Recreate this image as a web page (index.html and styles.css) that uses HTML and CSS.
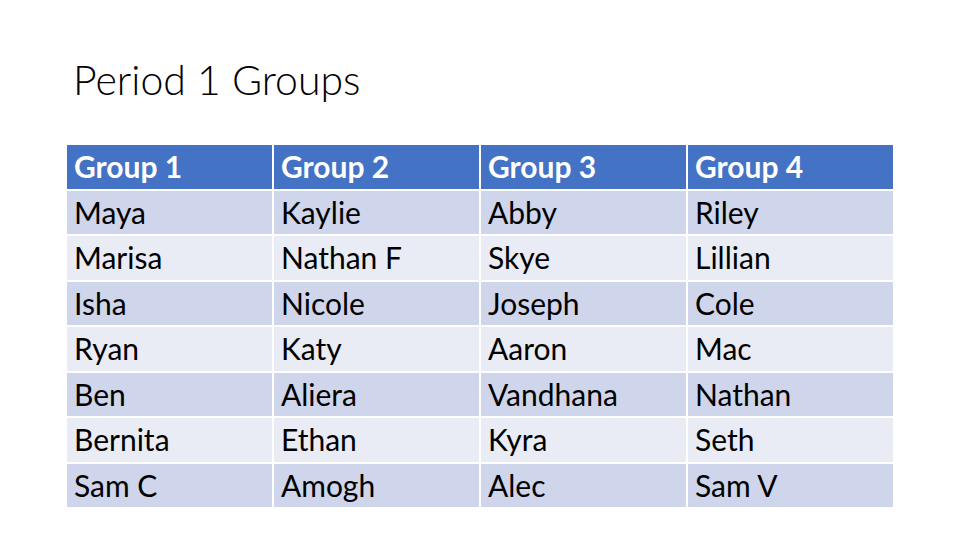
FILE: index.html
```html
<!DOCTYPE html>
<html>
<head>
<meta charset="utf-8">
<link rel="stylesheet" href="styles.css">
</head>
<body>
<div class="slide">
  <h1 class="title">Period 1 Groups</h1>
  <div class="table">
    <div class="cell head">Group 1</div>
    <div class="cell head">Group 2</div>
    <div class="cell head">Group 3</div>
    <div class="cell head">Group 4</div>

    <div class="cell odd">Maya</div>
    <div class="cell odd">Kaylie</div>
    <div class="cell odd">Abby</div>
    <div class="cell odd">Riley</div>

    <div class="cell even">Marisa</div>
    <div class="cell even">Nathan F</div>
    <div class="cell even">Skye</div>
    <div class="cell even">Lillian</div>

    <div class="cell odd">Isha</div>
    <div class="cell odd">Nicole</div>
    <div class="cell odd">Joseph</div>
    <div class="cell odd">Cole</div>

    <div class="cell even">Ryan</div>
    <div class="cell even">Katy</div>
    <div class="cell even">Aaron</div>
    <div class="cell even">Mac</div>

    <div class="cell odd">Ben</div>
    <div class="cell odd">Aliera</div>
    <div class="cell odd">Vandhana</div>
    <div class="cell odd">Nathan</div>

    <div class="cell even">Bernita</div>
    <div class="cell even">Ethan</div>
    <div class="cell even">Kyra</div>
    <div class="cell even">Seth</div>

    <div class="cell odd">Sam C</div>
    <div class="cell odd">Amogh</div>
    <div class="cell odd">Alec</div>
    <div class="cell odd">Sam V</div>
  </div>
</div>
</body>
</html>
```
FILE: styles.css
```css
html, body {
  margin: 0;
  padding: 0;
  background: #ffffff;
}
.slide {
  width: 960px;
  height: 540px;
  box-sizing: border-box;
  padding: 56px 0 0 67px;
  background: #ffffff;
  font-family: Lato, "Liberation Sans", sans-serif;
}
.title {
  margin: 0 0 0 6px;
  font-weight: 300;
  font-size: 41px;
  line-height: 48px;
  color: #000000;
  height: 89px;
}
.table {
  display: grid;
  grid-template-columns: repeat(4, 205px);
  grid-template-rows: repeat(8, 43.5px);
  gap: 2px;
  width: 826px;
}
.cell {
  padding-left: 7px;
  font-size: 30px;
  line-height: 43.5px;
  color: #000000;
  white-space: nowrap;
}
.head {
  background: #4472c4;
  color: #ffffff;
  font-weight: 700;
}
.odd {
  background: #cfd5ea;
}
.even {
  background: #e9ebf5;
}
```
